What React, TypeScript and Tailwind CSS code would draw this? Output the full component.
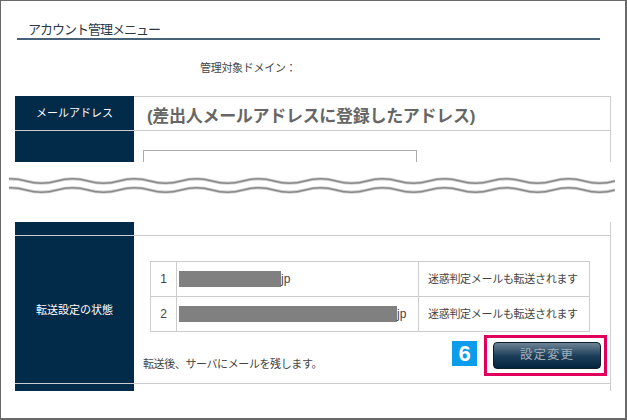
import React from 'react';

const wavePath = (cy: number, amp: number, period: number, phase: number, width: number) => {
  // sine-ish wave built from quadratic curves, one per half period
  const half = period / 2;
  let x = -phase;
  let up = true;
  let d = `M ${x} ${cy}`;
  while (x < width) {
    const cx = x + half / 2;
    const y = up ? cy - amp * 2 : cy + amp * 2;
    d += ` Q ${cx} ${y} ${x + half} ${cy}`;
    x += half;
    up = !up;
  }
  return d;
};

function Wave() {
  const w = 606;
  const lines = [19, 28];
  return (
    <svg width={w} height={60} viewBox={`0 0 ${w} 60`} className="block">
      {lines.map((cy) => (
        <g key={cy}>
          <path d={wavePath(cy, 2.2, 62, 14, w)} fill="none" stroke="#cfcfcf" strokeWidth={3.2} />
          <path d={wavePath(cy, 2.2, 62, 14, w)} fill="none" stroke="#8a8a8a" strokeWidth={1.5} />
        </g>
      ))}
    </svg>
  );
}

function HeadCell({ children, className = '' }: { children?: React.ReactNode; className?: string }) {
  return (
    <div className={`w-[119px] shrink-0 bg-[#022b4a] flex items-center justify-center text-white text-[11px] leading-[16px] ${className}`}>
      {children}
    </div>
  );
}

function Redacted({ width }: { width: number }) {
  return <span className="inline-block h-[16px] bg-[#808080]" style={{ width }} />;
}

export default function App() {
  const rows = [
    { no: '1', bar: 102 },
    { no: '2', bar: 218 },
  ];

  return (
    <div className="w-[627px] h-[420px] bg-white border-l border-t border-r-2 border-b-2 border-[#6a6a6a] overflow-hidden font-['Liberation_Sans','Noto_Sans_CJK_JP',sans-serif]">
      {/* Title */}
      <div className="ml-[16px] w-[583px] pt-[21px] border-b-2 border-[#48627a]">
        <h1 className="pl-[11px] text-[13px] leading-[16px] text-[#2c3846] font-normal tracking-[-1px]">アカウント管理メニュー</h1>
      </div>

      {/* Domain */}
      <p className="mt-[20px] pl-[199px] text-[11px] leading-[16px] text-[#444] tracking-[-0.3px]">管理対象ドメイン：</p>

      {/* Table top part */}
      <div className="mt-[20px] ml-[14px] w-[596px]">
        <div className="flex h-[35px] border-b border-[#cccccc]">
          <HeadCell>メールアドレス</HeadCell>
          <div className="flex-1 flex items-center pl-[13px] pt-[6px] border-t border-r border-[#cccccc] text-[17px] leading-[20px] font-bold text-[#666] tracking-[-0.3px]">
            (差出人メールアドレスに登録したアドレス)
          </div>
        </div>
        <div className="flex h-[31px]">
          <HeadCell />
          <div className="flex-1 border-r border-[#cccccc] pt-[19px] pl-[9px]">
            <div className="w-[274px] h-[12px] border-t border-l border-r border-[#aaaaaa]" />
          </div>
        </div>
      </div>

      {/* Cut mark */}
      <div className="ml-[8px]">
        <Wave />
      </div>

      {/* Table bottom part */}
      <div className="ml-[14px] w-[596px]">
        <div className="flex h-[14px] border-b border-[#cccccc]">
          <HeadCell />
          <div className="flex-1 border-r border-[#cccccc]" />
        </div>
        <div className="flex h-[148px] border-b border-[#cccccc]">
          <HeadCell>転送設定の状態</HeadCell>
          <div className="flex-1 border-r border-[#cccccc] pt-[25px]">
            <div className="ml-[16px] w-[440px] grid grid-cols-[25px_241px_170px] grid-rows-[34px_34px] gap-px p-px bg-[#cccccc] text-[#444]">
              {rows.map((r) => (
                <React.Fragment key={r.no}>
                  <div className="bg-white flex items-center justify-center text-[12px]">{r.no}</div>
                  <div className="bg-white flex items-center pl-[2px] text-[12px]">
                    <Redacted width={r.bar} />
                    <span>jp</span>
                  </div>
                  <div className="bg-white flex items-center pl-[9px] text-[11px] tracking-[-0.3px]">迷惑判定メールも転送されます</div>
                </React.Fragment>
              ))}
            </div>

            <div className="mt-[3px] flex items-start pl-[9px] pr-[3px]">
              <p className="mt-[21px] text-[11px] leading-[16px] text-[#444] tracking-[-0.4px]">転送後、サーバにメールを残します。</p>
              <div className="flex-1" />
              <div className="mt-[6px] mr-[7px] w-[25px] h-[25px] bg-[#0c9cec] flex items-center justify-center text-white font-bold text-[22px] leading-none">
                6
              </div>
              <div className="w-[123px] h-[41px] border-[3px] border-[#e0005b] pl-[6px] pt-[4px]">
                <button className="w-[108px] h-[27px] rounded-[4px] border border-[#0b1e30] bg-gradient-to-b from-[#6f8596] via-[#1f405b] to-[#02243f] text-[12.5px] text-[#a3b0bb] tracking-[1px] flex items-center justify-center">
                  設定変更
                </button>
              </div>
            </div>
          </div>
        </div>
        <div className="flex h-[7px]">
          <HeadCell />
          <div className="flex-1 border-r border-[#cccccc]" />
        </div>
      </div>
    </div>
  );
}
